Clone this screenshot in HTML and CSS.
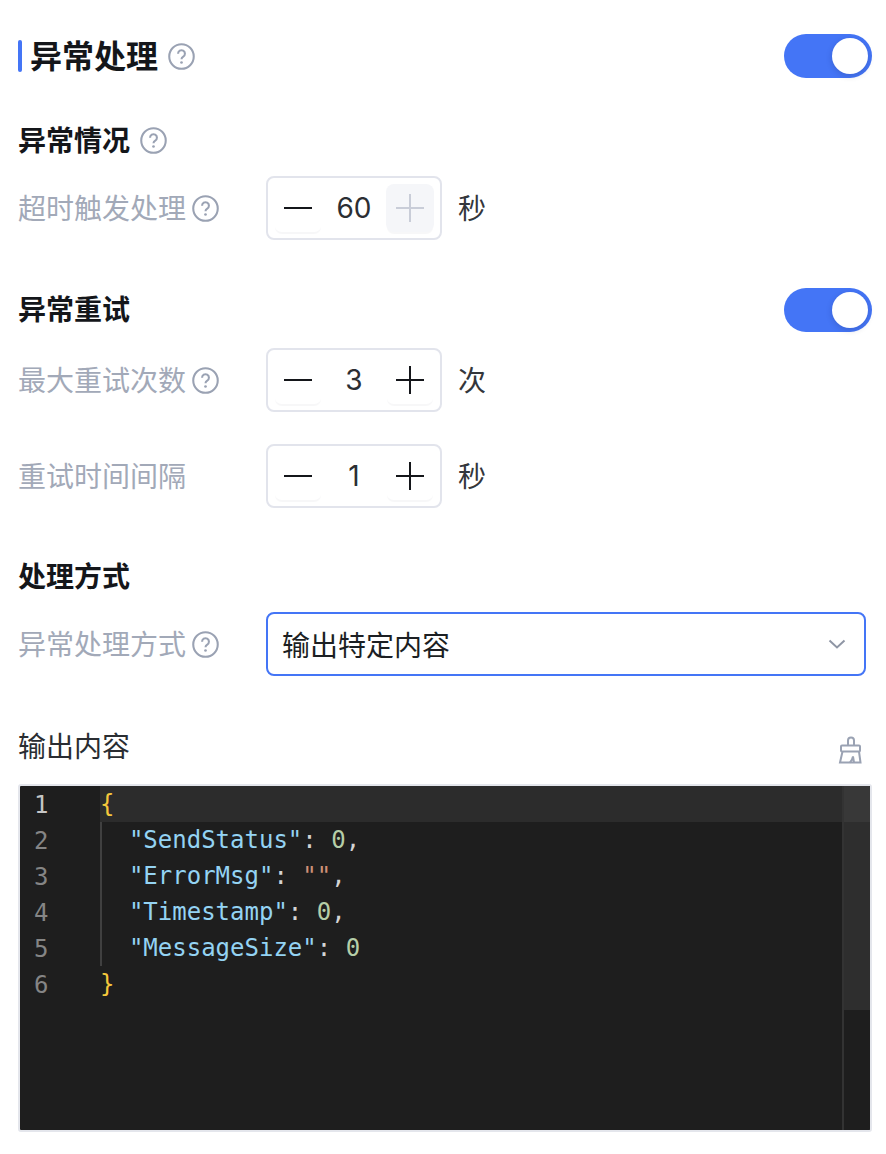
FILE: index.html
```html
<!DOCTYPE html>
<html lang="zh-CN">
<head>
<meta charset="utf-8">
<title>异常处理</title>
<link rel="stylesheet" href="styles.css">
</head>
<body>
<main class="page">
  <header class="head head-main">
    <div class="title-wrap">
      <span class="title-bar"></span>
      <h1 class="title">异常处理</h1>
      <svg class="help" viewBox="0 0 26 26"><use href="#i-help"/></svg>
    </div>
    <span class="switch"><span class="knob"></span></span>
  </header>

  <section class="sec sec-a">
    <div class="head">
      <div class="title-wrap"><h2 class="subtitle">异常情况</h2><svg class="help" viewBox="0 0 26 26"><use href="#i-help"/></svg></div>
    </div>
    <div class="row">
      <div class="label"><span>超时触发处理</span><svg class="help" viewBox="0 0 26 26"><use href="#i-help"/></svg></div>
      <div class="stepper">
        <button class="step"><svg viewBox="0 0 28 28"><use href="#i-minus"/></svg></button>
        <span class="val">60</span>
        <button class="step off"><svg viewBox="0 0 28 28"><use href="#i-plus"/></svg></button>
      </div>
      <span class="unit">秒</span>
    </div>
  </section>

  <section class="sec sec-b">
    <div class="head">
      <h2 class="subtitle">异常重试</h2>
      <span class="switch"><span class="knob"></span></span>
    </div>
    <div class="row row-b">
      <div class="label"><span>最大重试次数</span><svg class="help" viewBox="0 0 26 26"><use href="#i-help"/></svg></div>
      <div class="stepper">
        <button class="step"><svg viewBox="0 0 28 28"><use href="#i-minus"/></svg></button>
        <span class="val">3</span>
        <button class="step"><svg viewBox="0 0 28 28"><use href="#i-plus"/></svg></button>
      </div>
      <span class="unit">次</span>
    </div>
    <div class="row row-c">
      <div class="label"><span>重试时间间隔</span></div>
      <div class="stepper">
        <button class="step"><svg viewBox="0 0 28 28"><use href="#i-minus"/></svg></button>
        <span class="val">1</span>
        <button class="step"><svg viewBox="0 0 28 28"><use href="#i-plus"/></svg></button>
      </div>
      <span class="unit">秒</span>
    </div>
  </section>

  <section class="sec sec-c">
    <div class="head"><h2 class="subtitle">处理方式</h2></div>
    <div class="row">
      <div class="label"><span>异常处理方式</span><svg class="help" viewBox="0 0 26 26"><use href="#i-help"/></svg></div>
      <div class="select">
        <span>输出特定内容</span>
        <svg class="chev" viewBox="0 0 18 10"><path d="M1.5 1.5 9 8.500l7.500-7"/></svg>
      </div>
    </div>
  </section>

  <section class="sec sec-d">
    <div class="head head-out">
      <span class="out-label">输出内容</span>
      <svg class="broom" viewBox="0 0 24 28">
        <path d="M10 9V4.500a3 3 0 0 1 6 0V9"/>
        <rect x="3" y="9.500" width="19" height="6" rx="1"/>
        <path d="M4.500 15.500 2 26.500h20.500l-1.500-11"/>
        <path d="M12 26.500c1.500-1.500 2.500-3.500 3-6l1 6"/>
      </svg>
    </div>
    <div class="editor">
      <div class="line current"><span class="ln">1</span><span class="code"><i class="br">{</i></span></div>
      <div class="line"><span class="ln">2</span><span class="code guide">  <i class="key">"SendStatus"</i><i class="pn">: </i><i class="num">0</i><i class="pn">,</i></span></div>
      <div class="line"><span class="ln">3</span><span class="code guide">  <i class="key">"ErrorMsg"</i><i class="pn">: </i><i class="str">""</i><i class="pn">,</i></span></div>
      <div class="line"><span class="ln">4</span><span class="code guide">  <i class="key">"Timestamp"</i><i class="pn">: </i><i class="num">0</i><i class="pn">,</i></span></div>
      <div class="line"><span class="ln">5</span><span class="code guide">  <i class="key">"MessageSize"</i><i class="pn">: </i><i class="num">0</i></span></div>
      <div class="line"><span class="ln">6</span><span class="code"><i class="br">}</i></span></div>
      <div class="ruler"><div class="ruler-slider"></div><div class="ruler-mark"></div></div>
    </div>
  </section>
</main>

<svg class="defs" aria-hidden="true">
  <symbol id="i-help" viewBox="0 0 26 26">
    <circle cx="13" cy="13" r="11.800" fill="none" stroke="currentColor" stroke-width="2"/>
    <path d="M9.700 10.300a3.300 3.300 0 1 1 5 2.800c-1.100.7-1.700 1.300-1.700 2.500" fill="none" stroke="currentColor" stroke-width="2"/>
    <circle cx="13" cy="18.800" r="1.300" fill="currentColor"/>
  </symbol>
  <symbol id="i-minus" viewBox="0 0 28 28"><path d="M0 14h28" stroke="currentColor" stroke-width="2"/></symbol>
  <symbol id="i-plus" viewBox="0 0 28 28"><path d="M0 14h28M14 0v28" stroke="currentColor" stroke-width="2"/></symbol>
</svg>
</body>
</html>
```
FILE: styles.css
```css
* { box-sizing: border-box; }
html, body { margin: 0; padding: 0; background: #fff; }
body {
  font-family: "Noto Sans CJK SC", "Inter", sans-serif;
  color: #1c1f23;
  font-size: 28px;
}
.defs { display: none; }
.page { width: 886px; padding: 34px 14px 0 18px; }

.head {
  display: flex;
  align-items: center;
  justify-content: space-between;
  height: 44px;
}
.title-wrap { display: flex; align-items: center; }
.title-bar { width: 4px; height: 32px; border-radius: 2px; background: #4475f6; margin-right: 8px; }
.title { margin: 0; padding-bottom: 4px; font-size: 32px; font-weight: 700; line-height: 44px; color: #14161a; }
.subtitle { margin: 0; padding-bottom: 4px; font-size: 28px; font-weight: 700; line-height: 44px; color: #14161a; }
.help { width: 27px; height: 27px; color: #9aa2b3; margin-left: 10px; flex: none; }
.subtitle + .help { margin-left: 10px; margin-bottom: 2px; }
.label .help { margin-left: 6px; }

.switch {
  position: relative;
  display: block;
  width: 88px;
  height: 44px;
  border-radius: 22px;
  background: #4475f6;
  flex: none;
}
.knob {
  position: absolute;
  top: 4px;
  right: 4px;
  width: 36px;
  height: 36px;
  border-radius: 50%;
  background: #fff;
  box-shadow: 0 2px 6px rgba(20, 30, 60, .18);
}

.sec-a { margin-top: 41px; }
.sec-b { margin-top: 48px; }
.sec-c { margin-top: 47px; }
.sec-d { margin-top: 48px; }
.sec-a .row, .sec-c .row { margin-top: 13px; }
.row { display: flex; align-items: center; height: 64px; }
.row-b { margin-top: 16px; }
.row-c { margin-top: 32px; }
.label { display: flex; align-items: center; width: 248px; flex: none; color: #a2a9b8; line-height: 40px; }
.label span { padding-bottom: 2px; }

.stepper {
  display: flex;
  align-items: center;
  justify-content: space-between;
  width: 176px;
  height: 64px;
  padding: 6px;
  border: 2px solid #e2e4ec;
  border-radius: 8px;
}
.step {
  display: flex;
  align-items: center;
  justify-content: center;
  width: 48px;
  height: 48px;
  padding: 0;
  border: 0;
  border-radius: 8px;
  background: #fff;
  color: #14161a;
  box-shadow: 0 3px 1px -1px rgba(30, 40, 70, .035);
}
.step svg { width: 28px; height: 28px; }
.step.off { background: #f5f6f9; color: #c9cdd8; }
.val { font-family: "Inter", sans-serif; font-size: 28px; color: #2b2e33; line-height: 40px; }
.unit { margin-left: 16px; padding-bottom: 2px; color: #33363b; line-height: 40px; }

.select {
  display: flex;
  align-items: center;
  justify-content: space-between;
  width: 600px;
  height: 64px;
  padding: 0 18px 0 14px;
  border: 2px solid #4475f6;
  border-radius: 8px;
  color: #1c1f23;
}
.chev { width: 18px; height: 10px; fill: none; stroke: #8f96a5; stroke-width: 2; }

.head-out { width: 844px; }
.out-label { padding-bottom: 2px; color: #2a2d32; line-height: 44px; }
.broom { width: 24px; height: 28px; fill: none; stroke: #9aa2b3; stroke-width: 2; margin-top: 8px; flex: none; }

.editor {
  position: relative;
  width: 854px;
  height: 348px;
  margin-top: 16px;
  border: 2px solid #e4e6ec;
  border-radius: 3px;
  background: #1e1e1e;
  font-family: "DejaVu Sans Mono", "Liberation Mono", monospace;
  font-size: 24px;
  overflow: hidden;
}
.line { display: flex; height: 36px; line-height: 36px; }
.ln { width: 80px; flex: none; padding-left: 14px; line-height: 38px; color: #858585; }
.code { flex: 1; white-space: pre; color: #d4d4d4; }
.code i { font-style: normal; }
.current .ln { color: #c6c6c6; }
.current .code { background: #2c2c2c; }
.guide { box-shadow: inset 2px 0 0 #404040; }
.br { color: #f5c83c; }
.key { color: #94d3f3; }
.num { color: #b5cea8; }
.str { color: #ce9178; }
.pn { color: #d4d4d4; }

.ruler {
  position: absolute;
  top: 0;
  right: 0;
  bottom: 0;
  width: 28px;
  border-left: 2px solid #333;
  background: #1e1e1e;
}
.ruler-slider { height: 224px; background: #2e2e2e; }
.ruler-mark { position: absolute; top: 0; left: 0; right: 0; height: 36px; background: #383838; }
```
